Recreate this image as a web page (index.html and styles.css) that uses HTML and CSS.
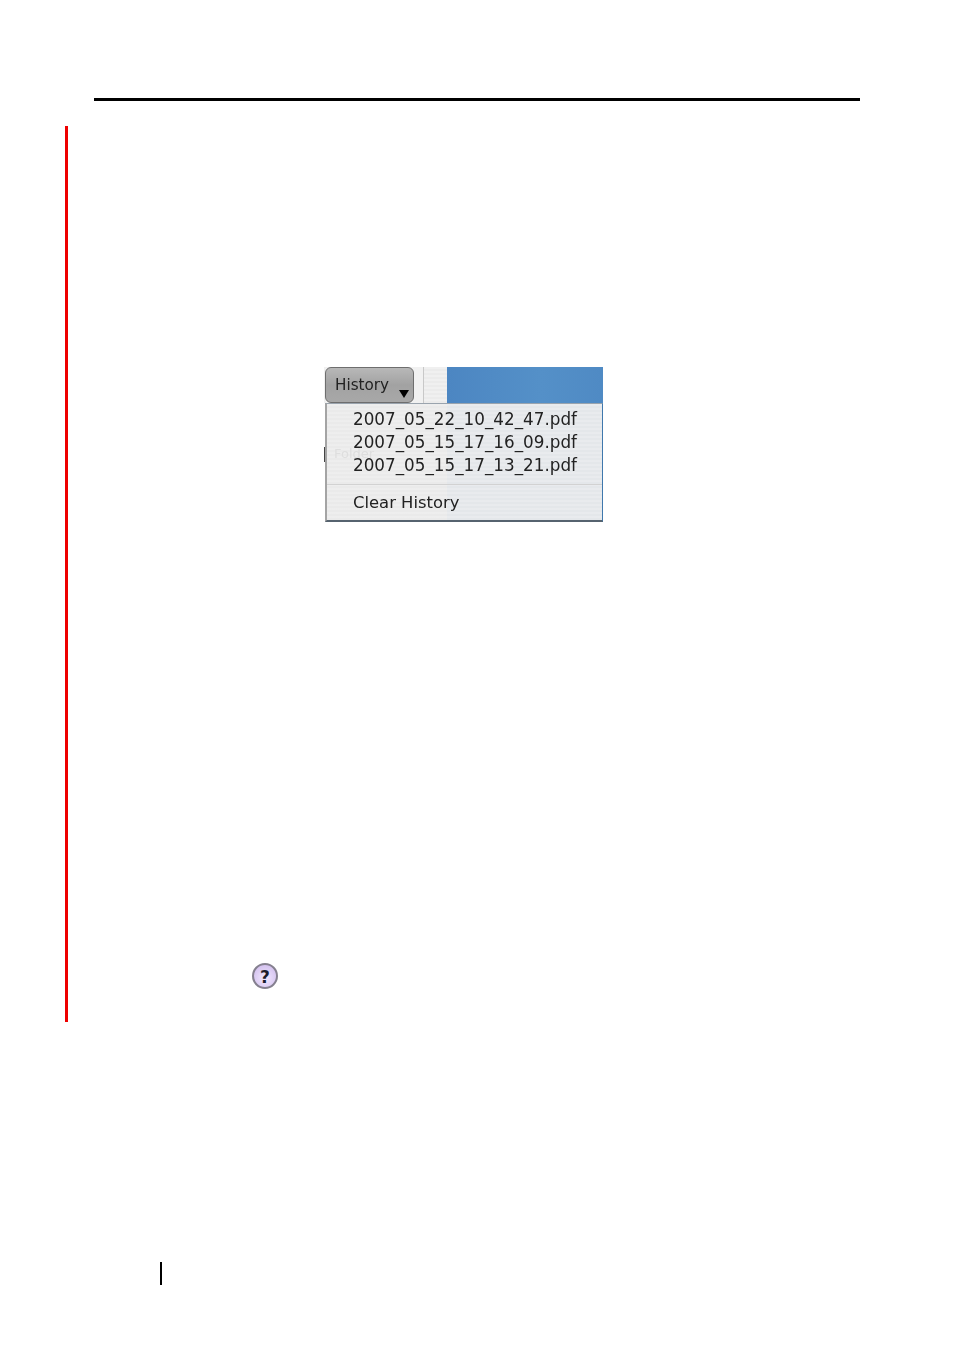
FILE: index.html
```html
<!DOCTYPE html>
<html lang="en">
<head>
  <meta charset="UTF-8">
  <title>History</title>
  <link rel="stylesheet" href="styles.css">
</head>
<body>
  <div class="page">
    <div class="top-rule"></div>

    <!-- red change bar with figure and help icon -->
    <div class="changed">
      <div class="shot">
        <div class="toolbar">
          <div class="history-button">
            <span>History</span>
            <span class="arrow"></span>
          </div>
          <div class="toolbar-gap"></div>
          <div class="toolbar-blue"></div>
        </div>
        <div class="menu">
          <span class="behind">Folder</span>
          <div class="menu-item">2007_05_22_10_42_47.pdf</div>
          <div class="menu-item">2007_05_15_17_16_09.pdf</div>
          <div class="menu-item">2007_05_15_17_13_21.pdf</div>
          <div class="menu-line"></div>
          <div class="menu-item">Clear History</div>
        </div>
        <div class="edge-mark"></div>
      </div>
      <div class="help-icon">?</div>
    </div>

    <div class="page-mark"></div>
  </div>
</body>
</html>
```

FILE: styles.css
```css
body {
  margin: 0;
  background-color: white;
  font-family: "DejaVu Sans", sans-serif;
}

.page {
  padding-top: 98px;
  height: 1252px;
}

.top-rule {
  width: 766px;
  height: 3px;
  margin-left: 94px;
  background-color: black;
}

/* red bar on the left */
.changed {
  height: 896px;
  margin-top: 25px;
  margin-left: 65px;
  border-left: 3px solid #ee0000;
  padding-top: 241px;
  box-sizing: border-box;
}

.shot {
  position: relative;
  width: 279px;
  height: 155px;
  margin-left: 256px;
  filter: blur(0.4px);
}

.toolbar {
  display: flex;
  height: 36px;
  background-color: #f1f1f1;
}

.history-button {
  display: flex;
  justify-content: space-between;
  width: 89px;
  height: 36px;
  margin-left: 1px;
  padding: 8px 0 0 9px;
  box-sizing: border-box;
  border: 1px solid #6e6e6e;
  border-radius: 6px;
  background: linear-gradient(#b8b8b8, #a2a2a2 50%, #a8a8a8);
  color: #222;
  font-size: 15.2px;
}

.arrow {
  width: 0;
  height: 0;
  margin: 14px 4px 0 0;
  border-left: 5px solid transparent;
  border-right: 5px solid transparent;
  border-top: 8px solid black;
}

.toolbar-gap {
  width: 24px;
  margin-left: 9px;
  border-left: 1px solid #c8c8c8;
  box-sizing: border-box;
  background: repeating-linear-gradient(#f0f0f0 0, #f0f0f0 2px, #ebebeb 2px, #ebebeb 4px);
}

.toolbar-blue {
  flex: 1;
  background: linear-gradient(to right, #4c86c2, #5490c8 60%, #4f8ac4);
}

.menu {
  position: relative;
  margin-left: 1px;
  height: 119px;
  padding-top: 4px;
  box-sizing: border-box;
  border-top: 1px solid #9aa4ae;
  border-right: 1px solid #3f78ad;
  border-bottom: 2px solid #56636f;
  border-left: 2px solid #a4a4a4;
  background:
    repeating-linear-gradient(rgba(255, 255, 255, 0.18) 0, rgba(255, 255, 255, 0.18) 2px, transparent 2px, transparent 4px),
    linear-gradient(to right, #eaeaea 120px, #e4e7ea 120px);
  color: #222;
}

.behind {
  position: absolute;
  top: 42px;
  left: 7px;
  font-size: 13px;
  color: #dedede;
}

.menu-item {
  height: 23px;
  line-height: 23px;
  padding-left: 26px;
  font-size: 16.8px;
}

.menu-line {
  height: 1px;
  margin: 7px 0 6px;
  background-color: #d2d2d2;
}

.menu-item:last-child {
  font-size: 16.4px;
}

.edge-mark {
  position: absolute;
  top: 80px;
  left: 0;
  width: 1px;
  height: 15px;
  background-color: #444;
}

.help-icon {
  width: 26px;
  height: 26px;
  margin-top: 441px;
  margin-left: 184px;
  box-sizing: border-box;
  border: 2px solid #85808f;
  border-radius: 50%;
  background: radial-gradient(circle at 50% 60%, #f2e9ff, #cbb6ea);
  color: #1c1c2c;
  font-size: 17px;
  font-weight: bold;
  line-height: 24px;
  text-align: center;
}

.page-mark {
  width: 2px;
  height: 23px;
  margin-top: 240px;
  margin-left: 160px;
  background-color: black;
}
```
